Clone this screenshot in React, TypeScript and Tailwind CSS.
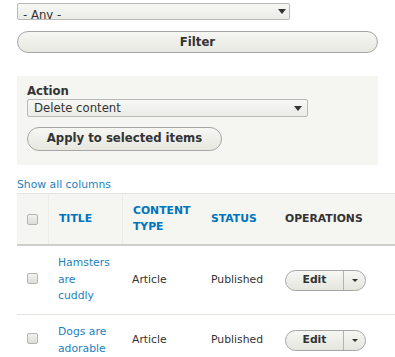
const font = { fontFamily: '"DejaVu Sans", Verdana, sans-serif' };

function Arrow({ className }: { className?: string }) {
  return (
    <svg width="8" height="5" viewBox="0 0 8 5" className={className}>
      <path d="M0 0h8L4 5z" fill="#333" />
    </svg>
  );
}

function Checkbox() {
  return (
    <span className="block w-[11px] h-[11px] rounded-[2px] border border-[#b4b4b0] bg-gradient-to-b from-[#f2f2f0] to-[#dcdcd8]" />
  );
}

function EditButton() {
  return (
    <div className="flex h-[21px] w-[81px] rounded-full border border-[#a6a6a6] bg-gradient-to-b from-[#f6f6f3] to-[#e6e6df] text-[#333]">
      <span className="flex w-[57px] items-center justify-center text-[10.8px] font-bold">Edit</span>
      <span className="flex flex-1 items-center justify-center border-l border-[#b4b4ae]">
        <svg width="6" height="3" viewBox="0 0 6 3">
          <path d="M0 0h6L3 3z" fill="#333" />
        </svg>
      </span>
    </div>
  );
}

const rows = [
  { title: ['Hamsters', 'are', 'cuddly'] },
  { title: ['Dogs are', 'adorable'] },
];

export default function App() {
  return (
    <div style={font} className="w-[395px] h-[357px] overflow-hidden bg-white text-[#333]">
      <div className="pl-[17px] pr-[17px] pt-[3px]">
        <div className="relative h-[17px] w-[273px] overflow-hidden rounded-[2px] border border-[#b9b9b5] bg-gradient-to-b from-[#f7f7f5] to-[#ebebe7]">
          <span className="block pl-[5px] pt-[4px] text-[11.7px] leading-[14px]">- Any -</span>
          <Arrow className="absolute right-[3px] top-[5px]" />
        </div>
        <button className="mt-[11px] flex h-[22px] w-full items-center justify-center rounded-full border border-[#a6a6a6] bg-gradient-to-b from-[#f6f6f3] to-[#e8e8e1] pt-[1px] text-[11.7px] font-bold text-[#333]">
          Filter
        </button>
        <div className="mt-[23px] h-[89px] bg-[#f5f5f2] px-[10px] pt-[8px]">
          <div className="text-[11.7px] font-bold leading-[14px]">Action</div>
          <div className="relative mt-[1px] flex h-[18px] w-[281px] items-center rounded-[2px] border border-[#b9b9b5] bg-gradient-to-b from-[#f7f7f5] to-[#ebebe7]">
            <span className="pl-[6px] text-[11.7px] leading-[14px]">Delete content</span>
            <Arrow className="absolute right-[5px] top-[6px]" />
          </div>
          <button className="mt-[10px] flex h-[24px] w-[195px] items-center justify-center rounded-full border border-[#a6a6a6] bg-gradient-to-b from-[#f6f6f3] to-[#e8e8e1] text-[11.7px] font-bold text-[#333]">
            Apply to selected items
          </button>
        </div>
        <div className="mt-[13px] text-[10.8px] leading-[14px] text-[#1d7fc0]">Show all columns</div>
      </div>
      <div className="ml-[17px] mt-[1px]">
        <div className="grid h-[53px] grid-cols-[31px_74px_79px_74px_1fr] border-t border-b-2 border-t-[#e4e4e0] border-b-[#cfcfca] bg-[#f5f5f2] text-[10.8px] font-bold leading-[16px]">
          <div className="flex items-center pl-[10px]">
            <Checkbox />
          </div>
          <div className="flex items-center border-l border-[#ececE8] pl-[10px] text-[#0074bd]">TITLE</div>
          <div className="flex items-center border-l border-[#ececE8] pl-[10px] text-[#0074bd]">
            CONTENT
            <br />
            TYPE
          </div>
          <div className="flex items-center pl-[10px] text-[#0074bd]">STATUS</div>
          <div className="flex items-center pl-[10px]">OPERATIONS</div>
        </div>
        {rows.map((r, i) => (
          <div
            key={i}
            className="grid grid-cols-[31px_74px_79px_74px_1fr] border-b border-[#e6e4df] py-[9px] text-[10.8px] leading-[16.7px]"
          >
            <div className="flex items-center pl-[10px] pb-[4px]">
              <Checkbox />
            </div>
            <div className="flex flex-col justify-center pl-[10px] text-[#1d7fc0]">
              {r.title.map((t) => (
                <span key={t}>{t}</span>
              ))}
            </div>
            <div className="flex items-center pl-[10px]">Article</div>
            <div className="flex items-center pl-[10px]">Published</div>
            <div className="flex items-center pl-[10px]">
              <EditButton />
            </div>
          </div>
        ))}
      </div>
    </div>
  );
}
